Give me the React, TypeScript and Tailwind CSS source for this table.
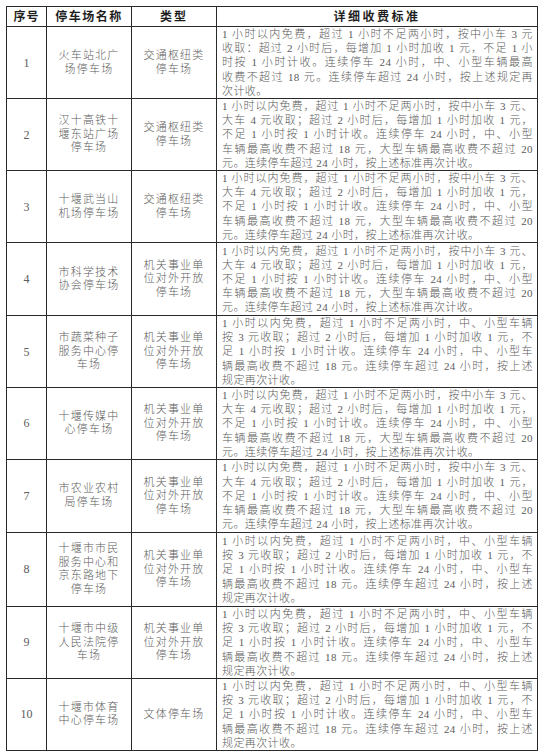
import React from "react";

const F = { fontFamily: '"Liberation Serif", "Noto Sans CJK SC", serif' } as const;

const A = [
  "1 小时以内免费，超过 1 小时不足两小时，按中小车 3 元、",
  "大车 4 元收取；超过 2 小时后，每增加 1 小时加收 1 元，",
  "不足 1 小时按 1 小时计收。连续停车 24 小时，中、小型",
  "车辆最高收费不超过 18 元，大型车辆最高收费不超过 20",
  "元。连续停车超过 24 小时，按上述标准再次计收。",
];
const B = [
  "1 小时以内免费，超过 1 小时不足两小时，中、小型车辆",
  "按 3 元收取；超过 2 小时后，每增加 1 小时加收 1 元，不",
  "足 1 小时按 1 小时计收。连续停车 24 小时，中、小型车",
  "辆最高收费不超过 18 元。连续停车超过 24 小时，按上述",
  "规定再次计收。",
];
const R1 = [
  "1 小时以内免费，超过 1 小时不足两小时，按中小车 3 元",
  "收取：超过 2 小时后，每增加 1 小时加收 1 元，不足 1 小",
  "时按 1 小时计收。连续停车 24 小时，中、小型车辆最高",
  "收费不超过 18 元。连续停车超过 24 小时，按上述规定再",
  "次计收。",
];
const T1 = ["交通枢纽类", "停车场"];
const T2 = ["机关事业单", "位对外开放", "停车场"];

const rows: { n: string; name: string[]; type: string[]; desc: string[]; h: string }[] = [
  { n: "1", name: ["火车站北广", "场停车场"], type: T1, desc: R1, h: "h-[72px]" },
  { n: "2", name: ["汉十高铁十", "堰东站广场", "停车场"], type: T1, desc: A, h: "h-[72px]" },
  { n: "3", name: ["十堰武当山", "机场停车场"], type: T1, desc: A, h: "h-[72px]" },
  { n: "4", name: ["市科学技术", "协会停车场"], type: T2, desc: A, h: "h-[73px]" },
  { n: "5", name: ["市蔬菜种子", "服务中心停", "车场"], type: T2, desc: B, h: "h-[72px]" },
  { n: "6", name: ["十堰传媒中", "心停车场"], type: T2, desc: A, h: "h-[71px]" },
  { n: "7", name: ["市农业农村", "局停车场"], type: T2, desc: A, h: "h-[73px]" },
  { n: "8", name: ["十堰市市民", "服务中心和", "京东路地下", "停车场"], type: T2, desc: B, h: "h-[74px]" },
  { n: "9", name: ["十堰市中级", "人民法院停", "车场"], type: T2, desc: B, h: "h-[72px]" },
  { n: "10", name: ["十堰市体育", "中心停车场"], type: ["文体停车场"], desc: B, h: "h-[72px]" },
];

const cell = "border border-[#2a2a2a] align-middle p-0";

export default function App() {
  return (
    <div className="bg-white w-[544px] h-[753px] overflow-hidden pt-[6px] pl-[6px] text-[#5c5c5c]" style={F}>
      <table className="table-fixed border-collapse w-[531px]">
        <colgroup>
          <col className="w-[40px]" />
          <col className="w-[85px]" />
          <col className="w-[85px]" />
          <col className="w-[321px]" />
        </colgroup>
        <thead>
          <tr className="h-[20px] text-[12px] font-bold text-[#1e1e1e]">
            <th className={`${cell} text-center tracking-[1px] leading-[18px]`}>序号</th>
            <th className={`${cell} text-center tracking-[1.5px] leading-[18px]`}>停车场名称</th>
            <th className={`${cell} text-center tracking-[2px] leading-[18px]`}>类型</th>
            <th className={`${cell} text-center tracking-[2.5px] leading-[18px]`}>详细收费标准</th>
          </tr>
        </thead>
        <tbody>
          {rows.map((r) => (
            <tr key={r.n} className={r.h}>
              <td className={`${cell} text-center text-[12px] leading-[14px]`}>{r.n}</td>
              <td className={`${cell} text-center text-[11px] tracking-[1.2px] font-light`}>
                {r.name.map((l, i) => (
                  <div key={i} className="h-[13.5px] leading-[13.5px] whitespace-nowrap">{l}</div>
                ))}
              </td>
              <td className={`${cell} text-center text-[11px] tracking-[1.2px] font-light`}>
                {r.type.map((l, i) => (
                  <div key={i} className="h-[13.5px] leading-[13.5px] whitespace-nowrap">{l}</div>
                ))}
              </td>
              <td className={`${cell} pl-[5px] pr-[4px] text-[11px] tracking-[0.4px] font-light`}>
                {r.desc.map((l, i) => (
                  <div
                    key={i}
                    className={
                      i < r.desc.length - 1
                        ? "h-[14.2px] leading-[14.2px] text-justify [text-align-last:justify] whitespace-nowrap"
                        : "h-[14.2px] leading-[14.2px] text-left whitespace-nowrap"
                    }
                  >
                    {l}
                  </div>
                ))}
              </td>
            </tr>
          ))}
        </tbody>
      </table>
    </div>
  );
}
